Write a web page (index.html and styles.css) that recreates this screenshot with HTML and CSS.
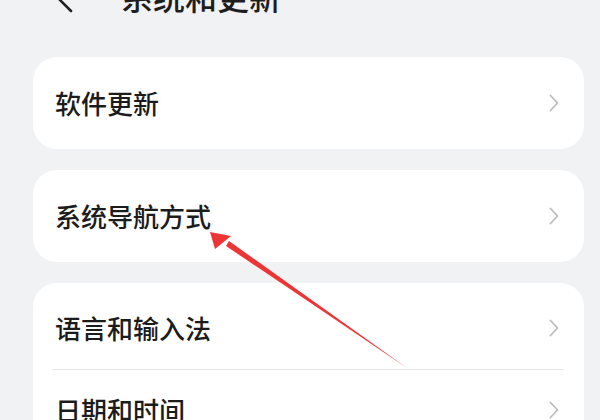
FILE: index.html
```html
<!DOCTYPE html>
<html lang="zh">
<head>
<meta charset="utf-8">
<link rel="stylesheet" href="styles.css">
</head>
<body>
<div class="page">
  <header class="header">
    <svg class="back" width="20" height="30" viewBox="0 0 20 30"><path d="M16 2 L3 15 L16 28" fill="none" stroke="#222" stroke-width="2.6" stroke-linecap="round" stroke-linejoin="round"/></svg>
    <h1 class="title">系统和更新</h1>
  </header>
  <div class="list">
    <div class="card">
      <div class="row"><span class="label">软件更新</span><svg class="chev" width="10" height="18" viewBox="0 0 10 18"><path d="M1.5 1.5 L8.5 9 L1.5 16.5" fill="none" stroke="#bcbcbc" stroke-width="1.8" stroke-linecap="round" stroke-linejoin="round"/></svg></div>
    </div>
    <div class="card">
      <div class="row"><span class="label">系统导航方式</span><svg class="chev" width="10" height="18" viewBox="0 0 10 18"><path d="M1.5 1.5 L8.5 9 L1.5 16.5" fill="none" stroke="#bcbcbc" stroke-width="1.8" stroke-linecap="round" stroke-linejoin="round"/></svg></div>
    </div>
    <div class="card">
      <div class="row row-first"><span class="label">语言和输入法</span><svg class="chev" width="10" height="18" viewBox="0 0 10 18"><path d="M1.5 1.5 L8.5 9 L1.5 16.5" fill="none" stroke="#bcbcbc" stroke-width="1.8" stroke-linecap="round" stroke-linejoin="round"/></svg></div>
      <div class="divider"></div>
      <div class="row row-next"><span class="label">日期和时间</span><svg class="chev" width="10" height="18" viewBox="0 0 10 18"><path d="M1.5 1.5 L8.5 9 L1.5 16.5" fill="none" stroke="#bcbcbc" stroke-width="1.8" stroke-linecap="round" stroke-linejoin="round"/></svg></div>
    </div>
  </div>
  <svg class="arrow" width="600" height="420" viewBox="0 0 600 420">
    <path d="M407 368 L229 241 L226 246 Z" fill="#ee3535"/>
    <path d="M210 232 L231 236 L215 249 Z" fill="#ee3535"/>
  </svg>
</div>
</body>
</html>
```
FILE: styles.css
```css
html, body {
  margin: 0;
  padding: 0;
  background: #f1f2f4;
  overflow: hidden;
}
.page {
  position: relative;
  width: 600px;
  height: 420px;
  overflow: hidden;
  font-family: "Noto Sans CJK SC", "Noto Sans", sans-serif;
}
.header {
  display: flex;
  align-items: center;
  height: 50px;
  margin-top: -29px;
  padding-left: 55px;
}
.back {
  display: block;
  margin-top: 3px;
}
.title {
  margin: 0 0 0 46px;
  font-size: 32px;
  line-height: 32px;
  font-weight: 500;
  color: #1e1e1e;
}
.list {
  display: flex;
  flex-direction: column;
  gap: 21px;
  margin: 36px 16px 0 33px;
}
.card {
  background: #ffffff;
  border-radius: 24px;
}
.row {
  display: flex;
  align-items: center;
  justify-content: space-between;
  box-sizing: border-box;
  height: 92px;
  padding: 0 25px 0 22px;
}
.row-first {
  height: 86px;
  padding-top: 4px;
}
.row-next {
  height: 80px;
}
.label {
  font-size: 26px;
  line-height: 30px;
  color: #1c1c1c;
  font-weight: 500;
}
.chev {
  display: block;
}
.divider {
  height: 1px;
  background: #e6e6e8;
  margin: 0 20px 0 19px;
}
.arrow {
  position: absolute;
  left: 0;
  top: 0;
  pointer-events: none;
}
```
